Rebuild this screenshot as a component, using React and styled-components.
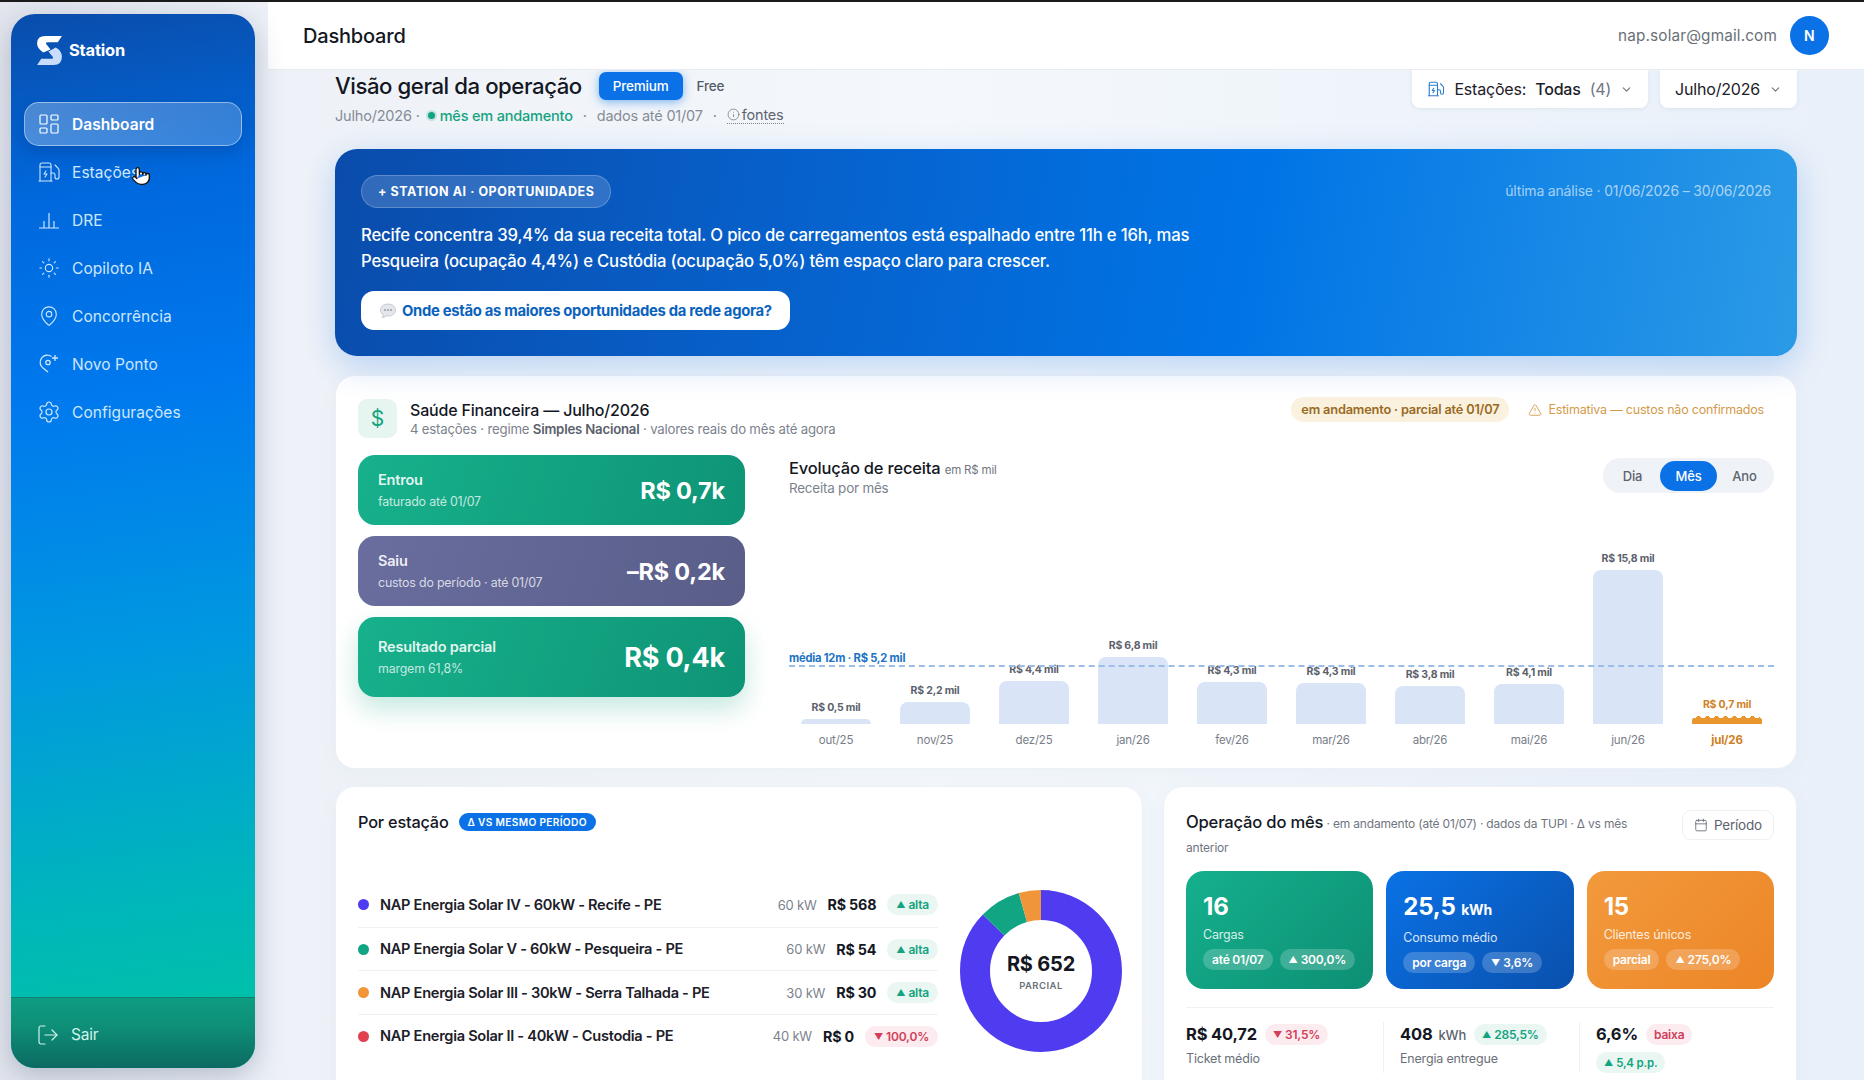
import React from "react";
import styled, { createGlobalStyle } from "styled-components";
import {
  LayoutDashboard,
  EvCharger,
  Sun,
  MapPin,
  Settings,
  LogOut,
  ChevronDown,
  TriangleAlert,
  Calendar,
  Info,
  Pointer,
} from "lucide-react";

const GlobalStyle = createGlobalStyle`
  * { box-sizing: border-box; }
  html, body { margin: 0; height: 100%; overflow: hidden; }
  body {
    font-family: "Inter", "Liberation Sans", sans-serif;
    background: #1a1a1a;
    color: #14171f;
    letter-spacing: -0.012em;
  }
`;

const Shell = styled.div`
  display: flex;
  height: 1078px;
  margin-top: 2px;
  overflow: hidden;
  background: linear-gradient(90deg, #e3e6ee 0, #eef2f8 300px, #f4f8fc 50%, #e9f0f9 100%);
`;

const Sidebar = styled.aside`
  position: relative;
  flex: 0 0 244px;
  margin: 12px 13px 12px 11px;
  display: flex;
  flex-direction: column;
  border-radius: 24px;
  overflow: hidden;
  background: linear-gradient(172deg, #0a4dab 0, #0068dc 17%, #0079ee 36%, #0098e0 60%, #00b5bc 82%, #00c6a0 100%);
  box-shadow: 0 8px 28px rgba(40, 60, 100, 0.28);
`;

const Brand = styled.div`
  display: flex;
  align-items: center;
  gap: 7px;
  padding-left: 26px;
  height: 72px;
  margin-bottom: 16px;
  color: #fff;
  font-size: 16.5px;
  font-weight: 700;
`;

const Nav = styled.nav`
  flex: 1;
  display: flex;
  flex-direction: column;
  gap: 4px;
  padding: 0 13px;
`;

const NavItem = styled.div`
  display: flex;
  align-items: center;
  gap: 11px;
  height: 44px;
  padding-left: 12px;
  border-radius: 15px;
  font-size: 15.5px;
  letter-spacing: 0.004em;
  font-weight: ${(p) => (p.$active ? 600 : 400)};
  color: ${(p) => (p.$active ? "#fff" : "#cfe6ff")};
  border: 1px solid ${(p) => (p.$active ? "rgba(255,255,255,.45)" : "transparent")};
  background: ${(p) => (p.$active ? "linear-gradient(90deg, rgba(255,255,255,.28), rgba(255,255,255,.2))" : "none")};
  box-shadow: ${(p) => (p.$active ? "0 6px 14px rgba(0,40,110,.22)" : "none")};
`;

const NavIcon = styled.span`
  display: flex;
  width: 24px;
  justify-content: center;
`;

const HandCursor = styled.span`
  position: absolute;
  left: 120px;
  top: 152px;
  display: flex;
  color: #111;
`;

const SideFooter = styled.div`
  display: flex;
  align-items: center;
  gap: 11px;
  height: 71px;
  padding: 3px 0 0 25px;
  font-size: 15.5px;
  color: #cff5ee;
  border-top: 1px solid #0c7f70;
  background: linear-gradient(180deg, #0d9d82 0, #0e8f78 40%, #0c6a62 100%);
`;

const Main = styled.div`
  flex: 1;
  min-width: 0;
  display: flex;
  flex-direction: column;
`;

const Topbar = styled.header`
  flex: 0 0 68px;
  display: flex;
  align-items: center;
  justify-content: space-between;
  padding: 0 35px;
  background: #fff;
  border-bottom: 1px solid #e8ebf0;
`;

const PageName = styled.div`
  font-size: 20px;
  font-weight: 500;
`;

const UserBox = styled.div`
  display: flex;
  align-items: center;
  gap: 13px;
  font-size: 15.3px;
  color: #6a6f78;
  letter-spacing: 0.01em;
`;

const Avatar = styled.div`
  width: 39px;
  height: 39px;
  border-radius: 50%;
  display: grid;
  place-items: center;
  background: #0a72e6;
  color: #fff;
  font-size: 14px;
  font-weight: 600;
`;

const Content = styled.main`
  flex: 1;
  min-height: 0;
  overflow: hidden;
  padding: 0 67px;
  display: flex;
  flex-direction: column;
  gap: 19px;
`;

const TopRow = styled.div`
  flex: 0 0 79px;
  margin-bottom: -19px;
  display: flex;
  justify-content: space-between;
`;

const TitleLine = styled.div`
  display: flex;
  align-items: center;
  height: 29px;
  margin-top: 1px;
`;

const PageTitle = styled.h1`
  margin: 0 17px 0 0;
  font-size: 22.2px;
  font-weight: 500;
  letter-spacing: -0.02em;
`;

const PlanTab = styled.span`
  height: 28px;
  display: flex;
  align-items: center;
  padding: 0 14px;
  border-radius: 7px;
  font-size: 13.5px;
  font-weight: 500;
  color: ${(p) => (p.$active ? "#fff" : "#555b66")};
  background: ${(p) => (p.$active ? "#0a72e6" : "none")};
  box-shadow: ${(p) => (p.$active ? "0 2px 10px rgba(10,114,230,.5)" : "none")};
`;

const SubLine = styled.div`
  display: flex;
  align-items: center;
  margin-top: 6px;
  font-size: 14.5px;
  color: #868c97;
`;

const LiveText = styled.span`
  display: flex;
  align-items: center;
  gap: 5px;
  margin: 0 10px 0 8px;
  color: #14a37f;
  font-weight: 500;
  &::before {
    content: "";
    width: 7px;
    height: 7px;
    border-radius: 50%;
    background: #14a37f;
    box-shadow: 0 0 0 2px rgba(20, 163, 127, 0.2);
  }
`;

const Sep = styled.span`
  margin: 0 10px;
`;

const SourcesLink = styled.span`
  display: flex;
  align-items: center;
  gap: 2px;
  margin-left: 10px;
  color: #5f6570;
  border-bottom: 1px dotted #7a808a;
`;

const Filters = styled.div`
  display: flex;
  gap: 12px;
`;

const FilterBox = styled.div`
  height: 38px;
  display: flex;
  align-items: center;
  gap: 9px;
  padding: 0 15px;
  background: #fff;
  border-radius: 0 0 8px 8px;
  box-shadow: 0 1px 4px rgba(40, 60, 100, 0.08);
  font-size: 16px;
  color: #1c2029;
`;

const FilterMuted = styled.span`
  color: #70757f;
`;

const FilterStrong = styled.span`
  font-weight: 500;
`;

const Banner = styled.section`
  flex: 0 0 205px;
  position: relative;
  padding: 26px 26px;
  border-radius: 22px;
  color: #fff;
  background: linear-gradient(100deg, #0a4cab 0, #0760ca 30%, #0074e6 62%, #2b9ae6 100%);
  box-shadow: 0 10px 34px rgba(0, 100, 220, 0.24);
`;

const AiChip = styled.div`
  display: inline-flex;
  align-items: center;
  height: 33px;
  padding: 0 16px;
  border-radius: 17px;
  background: rgba(255, 255, 255, 0.16);
  border: 1px solid rgba(255, 255, 255, 0.22);
  font-size: 12.5px;
  font-weight: 700;
  letter-spacing: 0.045em;
`;

const AnalysisDate = styled.div`
  position: absolute;
  right: 26px;
  top: 33px;
  font-size: 14px;
  color: rgba(255, 255, 255, 0.62);
`;

const BannerText = styled.p`
  margin: 14px 0 17px;
  max-width: 860px;
  font-size: 16.7px;
  font-weight: 500;
  line-height: 26px;
`;

const AskButton = styled.div`
  display: inline-flex;
  align-items: center;
  gap: 5px;
  height: 39px;
  padding: 0 18px;
  border-radius: 13px;
  background: #fff;
  color: #0a62bd;
  font-size: 14.8px;
  font-weight: 700;
  letter-spacing: -0.02em;
`;

const Card = styled.section`
  background: #fff;
  border: 1px solid #edf1f6;
  border-radius: 20px;
  padding: 23px 22px 18px;
  box-shadow: 0 4px 20px rgba(60, 90, 140, 0.04);
`;

const FinanceHead = styled.div`
  display: flex;
  align-items: center;
  height: 39px;
  gap: 13px;
`;

const DollarBox = styled.div`
  width: 39px;
  height: 39px;
  border-radius: 9px;
  display: grid;
  place-items: center;
  background: #e7f5f0;
  color: #14a37f;
  font-size: 21px;
`;

const HeadText = styled.div`
  flex: 1;
`;

const CardTitle = styled.div`
  font-size: ${(p) => p.$size || 16.3}px;
  font-weight: 500;
  line-height: 22px;
`;

const CardSub = styled.div`
  font-size: 13.2px;
  color: #7c828d;
  line-height: 17px;
  strong {
    font-weight: 600;
    color: #5b616c;
  }
`;

const StatusPill = styled.span`
  align-self: flex-start;
  height: 25px;
  margin-top: -2px;
  display: flex;
  align-items: center;
  padding: 0 10px;
  border-radius: 13px;
  background: #fbf1df;
  color: #9a6a1e;
  font-size: 12.8px;
  font-weight: 600;
`;

const EstimateNote = styled.span`
  align-self: flex-start;
  height: 25px;
  display: flex;
  align-items: center;
  gap: 6px;
  margin: -2px 10px 0 6px;
  font-size: 12.5px;
  color: #d49a4a;
`;

const FinanceBody = styled.div`
  display: flex;
  gap: 44px;
  margin-top: 17px;
`;

const MoneyStack = styled.div`
  flex: 0 0 387px;
  display: flex;
  flex-direction: column;
  gap: 11px;
`;

const MoneyCard = styled.div`
  height: ${(p) => (p.$big ? 80 : 70)}px;
  display: flex;
  align-items: center;
  justify-content: space-between;
  padding: 0 20px;
  border-radius: 17px;
  color: #fff;
  background: ${(p) =>
    p.$tone === "slate"
      ? "linear-gradient(110deg, #6a6e9f 0, #595d88 100%)"
      : "linear-gradient(110deg, #17b18c 0, #0e9476 100%)"};
  box-shadow: ${(p) => (p.$big ? "0 12px 26px rgba(16,160,125,.24)" : "none")};
`;

const MoneyLabel = styled.div`
  font-size: 14.5px;
  font-weight: 600;
  color: rgba(255, 255, 255, 0.9);
`;

const MoneyNote = styled.div`
  margin-top: 6px;
  font-size: 12.4px;
  font-weight: 400;
  color: rgba(255, 255, 255, 0.75);
`;

const MoneyValue = styled.div`
  font-size: ${(p) => (p.$big ? 27 : 23.5)}px;
  font-weight: 700;
`;

const ChartCol = styled.div`
  flex: 1;
  min-width: 0;
  height: 295px;
  display: flex;
  flex-direction: column;
`;

const ChartHead = styled.div`
  display: flex;
  justify-content: space-between;
  align-items: flex-start;
  height: 40px;
`;

const ChartTitle = styled.div`
  font-size: 16.5px;
  font-weight: 500;
  margin-top: 3px;
  span {
    font-size: 11.5px;
    font-weight: 400;
    color: #70757f;
  }
`;

const ChartSub = styled.div`
  font-size: 13.4px;
  color: #7c828d;
  margin-top: 2px;
`;

const Segments = styled.div`
  display: flex;
  align-items: center;
  height: 35px;
  margin-top: 3px;
  padding: 2px;
  border-radius: 18px;
  background: #eff2f7;
`;

const SegmentItem = styled.span`
  width: ${(p) => (p.$active ? 57 : 55)}px;
  height: 30px;
  display: grid;
  place-items: center;
  border-radius: 15px;
  font-size: 13px;
  font-weight: 500;
  color: ${(p) => (p.$active ? "#fff" : "#5d636e")};
  background: ${(p) => (p.$active ? "#0a72e6" : "none")};
`;

const Plot = styled.div`
  position: relative;
  flex: 1;
  display: grid;
  grid-template-columns: repeat(10, 1fr);
  column-gap: 29px;
  padding: 0 12px;
`;

const AvgLine = styled.div`
  position: absolute;
  left: 0;
  right: 0;
  bottom: 83px;
  height: 0;
  border-top: 2px dashed #9cbde8;
`;

const AvgLabel = styled.div`
  position: absolute;
  left: 0;
  bottom: 85px;
  font-size: 11.2px;
  font-weight: 700;
  color: #1c73c4;
  letter-spacing: -0.02em;
`;

const BarColumn = styled.div`
  position: relative;
  display: flex;
  flex-direction: column;
  justify-content: flex-end;
  align-items: center;
`;

const BarValue = styled.div`
  position: relative;
  margin-bottom: ${(p) => (p.$now ? 7 : 5)}px;
  white-space: nowrap;
  font-size: 10.5px;
  font-weight: 700;
  color: ${(p) => (p.$now ? "#cf7f1f" : "#5b616c")};
`;

const Bar = styled.div`
  position: relative;
  width: 100%;
  height: ${(p) => p.$h}px;
  border-radius: ${(p) => (p.$now ? "2px 2px 0 0" : "8px 8px 0 0")};
  background: ${(p) => (p.$now ? "#e8962d" : "#d9e5f7")};
  ${(p) =>
    p.$now &&
    `&::before {
      content: "";
      position: absolute;
      left: 2px;
      right: 2px;
      top: -2px;
      height: 3px;
      background: radial-gradient(circle at 50% 100%, #e8962d 3px, transparent 3px) 0 0 / 9px 3px repeat-x;
    }`}
`;

const BarMonth = styled.div`
  height: 26px;
  line-height: 32px;
  font-size: 11.5px;
  font-weight: ${(p) => (p.$now ? 700 : 400)};
  color: ${(p) => (p.$now ? "#cf7f1f" : "#787e89")};
`;

const BottomGrid = styled.div`
  display: grid;
  grid-template-columns: 808px 634px;
  gap: 20px;
  flex: 1;
  min-height: 320px;
  margin-top: -2px;
`;

const StationHead = styled.div`
  display: flex;
  align-items: center;
  gap: 10px;
  height: 24px;
`;

const DeltaPill = styled.span`
  height: 18px;
  display: flex;
  align-items: center;
  padding: 0 9px;
  border-radius: 9px;
  background: #0a72e6;
  color: #fff;
  font-size: 10.2px;
  font-weight: 600;
  letter-spacing: 0.03em;
`;

const StationBody = styled.div`
  display: flex;
  gap: 22px;
  margin-top: 49px;
`;

const StationList = styled.div`
  flex: 0 0 580px;
`;

const StationRow = styled.div`
  display: flex;
  align-items: center;
  height: 43.7px;
  border-top: ${(p) => (p.$first ? "none" : "1px solid #eef1f5")};
`;

const Dot = styled.span`
  width: 11px;
  height: 11px;
  border-radius: 50%;
  margin-right: 11px;
  background: ${(p) => p.$color};
`;

const StationName = styled.span`
  flex: 1;
  font-size: 14.6px;
  font-weight: 600;
  color: #1c2029;
  letter-spacing: -0.02em;
`;

const StationKw = styled.span`
  font-size: 13px;
  color: #7c828d;
  margin-right: 11px;
`;

const StationValue = styled.span`
  font-size: 14.3px;
  font-weight: 700;
  margin-right: 11px;
`;

const Trend = styled.span`
  height: 21px;
  display: inline-flex;
  align-items: center;
  gap: 3px;
  padding: 0 8px;
  border-radius: 11px;
  font-size: 12px;
  font-weight: 600;
  white-space: nowrap;
  color: ${(p) => (p.$down ? "#d0405a" : "#14a37f")};
  background: ${(p) => (p.$down ? "#fdecef" : "#e9f6f2")};
`;

const StationTrend = styled(Trend)`
  padding: 0 9px;
`;

const TrendMark = styled.span`
  font-size: 9px;
`;

const DonutWrap = styled.div`
  position: relative;
  width: 162px;
  height: 162px;
  margin-top: 7px;
`;

const DonutCenter = styled.div`
  position: absolute;
  inset: 0;
  display: flex;
  flex-direction: column;
  align-items: center;
  justify-content: center;
`;

const DonutValue = styled.div`
  font-size: 20px;
  font-weight: 700;
`;

const DonutNote = styled.div`
  margin-top: 4px;
  font-size: 9.5px;
  font-weight: 600;
  letter-spacing: 0.05em;
  color: #6a6f78;
`;

const OpsHead = styled.div`
  display: flex;
  justify-content: space-between;
  align-items: flex-start;
  height: 61px;
`;

const OpsTitle = styled.div`
  max-width: 450px;
  line-height: 24px;
  font-size: 12px;
  color: #70757f;
  b {
    font-size: 16.6px;
    font-weight: 500;
    color: #14171f;
  }
`;

const PeriodButton = styled.div`
  height: 30px;
  display: flex;
  align-items: center;
  gap: 6px;
  padding: 0 11px;
  border: 1px solid #edf0f4;
  border-radius: 9px;
  font-size: 13.5px;
  color: #5d636e;
`;

const KpiGrid = styled.div`
  display: grid;
  grid-template-columns: repeat(3, 1fr);
  gap: 13px;
  padding-bottom: 18px;
  border-bottom: 1px solid #eef1f5;
`;

const KpiCard = styled.div`
  height: 118px;
  padding: 22px 17px 0;
  border-radius: 18px;
  color: #fff;
  background: ${(p) => p.$bg};
`;

const KpiValue = styled.div`
  font-size: 24px;
  font-weight: 700;
  line-height: 28px;
  span {
    font-size: 14px;
  }
`;

const KpiLabel = styled.div`
  margin-top: 6px;
  font-size: 12.5px;
  color: rgba(255, 255, 255, 0.85);
`;

const KpiChips = styled.div`
  display: flex;
  gap: 7px;
  margin-top: 7px;
`;

const KpiChip = styled.span`
  height: 21px;
  display: flex;
  align-items: center;
  gap: 3px;
  padding: 0 9px;
  border-radius: 11px;
  background: rgba(255, 255, 255, 0.2);
  font-size: 12px;
  font-weight: 600;
  white-space: nowrap;
`;

const StatGrid = styled.div`
  display: grid;
  grid-template-columns: 197px 196px 1fr;
  margin-top: 14px;
`;

const StatCell = styled.div`
  padding-left: ${(p) => (p.$first ? 0 : 16)}px;
  border-left: ${(p) => (p.$first ? "none" : "1px solid #eef1f5")};
`;

const StatTop = styled.div`
  display: flex;
  align-items: center;
  gap: 8px;
  height: 24px;
`;

const StatValue = styled.span`
  font-size: 16.5px;
  font-weight: 700;
  span {
    margin-left: 6px;
    font-size: 13px;
    font-weight: 500;
    color: #5d636e;
  }
`;

const StatLabel = styled.div`
  margin-top: 5px;
  font-size: 12.5px;
  color: #6a6f78;
`;

const SmallTrend = styled(Trend)`
  margin-top: 6px;
  font-size: 11.5px;
`;

// logo e icones que o lucide nao tem
function Logo() {
  return (
    <svg width="25" height="29" viewBox="0 0 24 28">
      <path fill="#fff" d="M8 0H24L20 6H10Q8 6 8.6 7.6L13 13 6 16Q0 12 0 7 0 0 8 0Z" />
      <path fill="#c9dcfb" d="M18 11Q24 14 24 20 24 28 16 28H0L4 22H14Q16 22 15.4 20.4L11 15Z" />
    </svg>
  );
}

function BarsIcon() {
  return (
    <svg width="20" height="20" viewBox="0 0 20 20" fill="none" stroke="currentColor" strokeWidth="1.2">
      <path d="M0 18H20M5 18V11M10 18V3M15 18V11" />
    </svg>
  );
}

function NewPointIcon() {
  return (
    <svg width="20" height="20" viewBox="0 0 20 20" fill="none" stroke="currentColor" strokeWidth="1.3">
      <circle cx="9" cy="8.5" r="2.2" />
      <path d="M12.5 2.6A7 7 0 1 0 4 14L9 18M16 1V7M13 4H19" />
    </svg>
  );
}

function ChatBubble() {
  return (
    <svg width="18" height="18" viewBox="0 0 18 18">
      <path fill="#e3e6ea" stroke="#b6bcc4" strokeWidth=".7" d="M9 2C4.6 2 1.5 4.6 1.5 8c0 2 1 3.6 2.8 4.700-.1 1.200-.6 2.200-1.300 3 1.700-.1 3.100-.8 4-1.800.6.1 1.300.1 2 .1 4.400 0 7.500-2.600 7.500-6S13.400 2 9 2z" />
      <circle cx="6" cy="8" r=".8" fill="#667" />
      <circle cx="9" cy="8" r=".8" fill="#667" />
      <circle cx="12" cy="8" r=".8" fill="#667" />
    </svg>
  );
}

function Donut({ slices }) {
  const r = 66;
  const len = 2 * Math.PI * r;
  const total = slices.reduce((s, x) => s + x.value, 0);
  let run = 0;
  return (
    <svg width="162" height="162" viewBox="0 0 162 162">
      <g transform="rotate(-90 81 81)" fill="none" strokeWidth="30">
        {slices.map((s) => {
          const part = (s.value / total) * len;
          const el = (
            <circle
              key={s.color}
              cx="81"
              cy="81"
              r={r}
              stroke={s.color}
              strokeDasharray={`${part} ${len - part}`}
              strokeDashoffset={-run}
            />
          );
          run += part;
          return el;
        })}
      </g>
    </svg>
  );
}

const navItems = [
  { label: "Dashboard", icon: <LayoutDashboard size={24} strokeWidth={1.2} />, active: true },
  { label: "Estações", icon: <EvCharger size={24} strokeWidth={1.1} /> },
  { label: "DRE", icon: <BarsIcon /> },
  { label: "Copiloto IA", icon: <Sun size={22} strokeWidth={1.2} /> },
  { label: "Concorrência", icon: <MapPin size={22} strokeWidth={1.2} /> },
  { label: "Novo Ponto", icon: <NewPointIcon /> },
  { label: "Configurações", icon: <Settings size={24} strokeWidth={1.2} /> },
];

const bars = [
  { month: "out/25", value: "R$ 0,5 mil", h: 5 },
  { month: "nov/25", value: "R$ 2,2 mil", h: 22 },
  { month: "dez/25", value: "R$ 4,4 mil", h: 43 },
  { month: "jan/26", value: "R$ 6,8 mil", h: 67 },
  { month: "fev/26", value: "R$ 4,3 mil", h: 42 },
  { month: "mar/26", value: "R$ 4,3 mil", h: 41 },
  { month: "abr/26", value: "R$ 3,8 mil", h: 38 },
  { month: "mai/26", value: "R$ 4,1 mil", h: 40 },
  { month: "jun/26", value: "R$ 15,8 mil", h: 154 },
  { month: "jul/26", value: "R$ 0,7 mil", h: 6, now: true },
];

const stations = [
  { name: "NAP Energia Solar IV - 60kW - Recife - PE", kw: "60 kW", value: "R$ 568", trend: "alta", color: "#4f3cf0" },
  { name: "NAP Energia Solar V - 60kW - Pesqueira - PE", kw: "60 kW", value: "R$ 54", trend: "alta", color: "#12a583" },
  { name: "NAP Energia Solar III - 30kW - Serra Talhada - PE", kw: "30 kW", value: "R$ 30", trend: "alta", color: "#f0953a" },
  { name: "NAP Energia Solar II - 40kW - Custodia - PE", kw: "40 kW", value: "R$ 0", trend: "100,0%", color: "#e04050", down: true },
];

const slices = [
  { value: 568, color: "#4f3cf0" },
  { value: 54, color: "#12a583" },
  { value: 30, color: "#f0953a" },
];

export default function App() {
  return (
    <>
      <GlobalStyle />
      <Shell>
        <Sidebar>
          <Brand>
            <Logo />
            Station
          </Brand>
          <Nav>
            {navItems.map((item) => (
              <NavItem key={item.label} $active={item.active}>
                <NavIcon>{item.icon}</NavIcon>
                {item.label}
              </NavItem>
            ))}
          </Nav>
          <HandCursor>
            <Pointer size={20} fill="#fff" strokeWidth={1.6} />
          </HandCursor>
          <SideFooter>
            <NavIcon>
              <LogOut size={24} strokeWidth={1.2} />
            </NavIcon>
            Sair
          </SideFooter>
        </Sidebar>

        <Main>
          <Topbar>
            <PageName>Dashboard</PageName>
            <UserBox>
              nap.solar@gmail.com
              <Avatar>N</Avatar>
            </UserBox>
          </Topbar>

          <Content>
            <TopRow>
              <div>
                <TitleLine>
                  <PageTitle>Visão geral da operação</PageTitle>
                  <PlanTab $active>Premium</PlanTab>
                  <PlanTab>Free</PlanTab>
                </TitleLine>
                <SubLine>
                  Julho/2026 ·
                  <LiveText>mês em andamento</LiveText>·<Sep>dados até 01/07</Sep>·
                  <SourcesLink>
                    <Info size={13} strokeWidth={1.2} />
                    fontes
                  </SourcesLink>
                </SubLine>
              </div>
              <Filters>
                <FilterBox>
                  <EvCharger size={18} color="#2f7fd0" strokeWidth={1.5} />
                  Estações: <FilterStrong>Todas</FilterStrong> <FilterMuted>(4)</FilterMuted>
                  <ChevronDown size={13} color="#70757f" />
                </FilterBox>
                <FilterBox>
                  Julho/2026
                  <ChevronDown size={13} color="#70757f" />
                </FilterBox>
              </Filters>
            </TopRow>

            <Banner>
              <AiChip>+ STATION AI · OPORTUNIDADES</AiChip>
              <AnalysisDate>última análise · 01/06/2026 – 30/06/2026</AnalysisDate>
              <BannerText>
                Recife concentra 39,4% da sua receita total. O pico de carregamentos está espalhado entre 11h e 16h, mas
                Pesqueira (ocupação 4,4%) e Custódia (ocupação 5,0%) têm espaço claro para crescer.
              </BannerText>
              <AskButton>
                <ChatBubble />
                Onde estão as maiores oportunidades da rede agora?
              </AskButton>
            </Banner>

            <Card>
              <FinanceHead>
                <DollarBox>$</DollarBox>
                <HeadText>
                  <CardTitle $size={16}>Saúde Financeira — Julho/2026</CardTitle>
                  <CardSub>
                    4 estações · regime <strong>Simples Nacional</strong> · valores reais do mês até agora
                  </CardSub>
                </HeadText>
                <StatusPill>em andamento · parcial até 01/07</StatusPill>
                <EstimateNote>
                  <TriangleAlert size={14} strokeWidth={1.5} />
                  Estimativa — custos não confirmados
                </EstimateNote>
              </FinanceHead>
              <FinanceBody>
                <MoneyStack>
                  <MoneyCard>
                    <div>
                      <MoneyLabel>Entrou</MoneyLabel>
                      <MoneyNote>faturado até 01/07</MoneyNote>
                    </div>
                    <MoneyValue>R$ 0,7k</MoneyValue>
                  </MoneyCard>
                  <MoneyCard $tone="slate">
                    <div>
                      <MoneyLabel>Saiu</MoneyLabel>
                      <MoneyNote>custos do período · até 01/07</MoneyNote>
                    </div>
                    <MoneyValue>–R$ 0,2k</MoneyValue>
                  </MoneyCard>
                  <MoneyCard $big>
                    <div>
                      <MoneyLabel>Resultado parcial</MoneyLabel>
                      <MoneyNote>margem 61,8%</MoneyNote>
                    </div>
                    <MoneyValue $big>R$ 0,4k</MoneyValue>
                  </MoneyCard>
                </MoneyStack>
                <ChartCol>
                  <ChartHead>
                    <div>
                      <ChartTitle>
                        Evolução de receita <span>em R$ mil</span>
                      </ChartTitle>
                      <ChartSub>Receita por mês</ChartSub>
                    </div>
                    <Segments>
                      <SegmentItem>Dia</SegmentItem>
                      <SegmentItem $active>Mês</SegmentItem>
                      <SegmentItem>Ano</SegmentItem>
                    </Segments>
                  </ChartHead>
                  <Plot>
                    {bars.map((b) => (
                      <BarColumn key={b.month}>
                        <BarValue $now={b.now}>{b.value}</BarValue>
                        <Bar $h={b.h} $now={b.now} />
                        <BarMonth $now={b.now}>{b.month}</BarMonth>
                      </BarColumn>
                    ))}
                    <AvgLine />
                    <AvgLabel>média 12m · R$ 5,2 mil</AvgLabel>
                  </Plot>
                </ChartCol>
              </FinanceBody>
            </Card>

            <BottomGrid>
              <Card>
                <StationHead>
                  <CardTitle>Por estação</CardTitle>
                  <DeltaPill>Δ VS MESMO PERÍODO</DeltaPill>
                </StationHead>
                <StationBody>
                  <StationList>
                    {stations.map((s, i) => (
                      <StationRow key={s.name} $first={i === 0}>
                        <Dot $color={s.color} />
                        <StationName>{s.name}</StationName>
                        <StationKw>{s.kw}</StationKw>
                        <StationValue>{s.value}</StationValue>
                        <StationTrend $down={s.down}>
                          <TrendMark>{s.down ? "▼" : "▲"}</TrendMark>
                          {s.trend}
                        </StationTrend>
                      </StationRow>
                    ))}
                  </StationList>
                  <DonutWrap>
                    <Donut slices={slices} />
                    <DonutCenter>
                      <DonutValue>R$ 652</DonutValue>
                      <DonutNote>PARCIAL</DonutNote>
                    </DonutCenter>
                  </DonutWrap>
                </StationBody>
              </Card>

              <Card>
                <OpsHead>
                  <OpsTitle>
                    <b>Operação do mês</b> · em andamento (até 01/07) · dados da TUPI · Δ vs mês anterior
                  </OpsTitle>
                  <PeriodButton>
                    <Calendar size={14} strokeWidth={1.4} />
                    Período
                  </PeriodButton>
                </OpsHead>
                <KpiGrid>
                  <KpiCard $bg="linear-gradient(135deg, #15b08d 0, #0d8f74 100%)">
                    <KpiValue>16</KpiValue>
                    <KpiLabel>Cargas</KpiLabel>
                    <KpiChips>
                      <KpiChip>até 01/07</KpiChip>
                      <KpiChip>
                        <TrendMark>▲</TrendMark>300,0%
                      </KpiChip>
                    </KpiChips>
                  </KpiCard>
                  <KpiCard $bg="linear-gradient(135deg, #0a72e6 0, #0a50ac 100%)">
                    <KpiValue>
                      25,5 <span>kWh</span>
                    </KpiValue>
                    <KpiLabel>Consumo médio</KpiLabel>
                    <KpiChips>
                      <KpiChip>por carga</KpiChip>
                      <KpiChip>
                        <TrendMark>▼</TrendMark>3,6%
                      </KpiChip>
                    </KpiChips>
                  </KpiCard>
                  <KpiCard $bg="linear-gradient(135deg, #f29a3d 0, #ec8526 100%)">
                    <KpiValue>15</KpiValue>
                    <KpiLabel>Clientes únicos</KpiLabel>
                    <KpiChips>
                      <KpiChip>parcial</KpiChip>
                      <KpiChip>
                        <TrendMark>▲</TrendMark>275,0%
                      </KpiChip>
                    </KpiChips>
                  </KpiCard>
                </KpiGrid>
                <StatGrid>
                  <StatCell $first>
                    <StatTop>
                      <StatValue>R$ 40,72</StatValue>
                      <Trend $down>
                        <TrendMark>▼</TrendMark>31,5%
                      </Trend>
                    </StatTop>
                    <StatLabel>Ticket médio</StatLabel>
                  </StatCell>
                  <StatCell>
                    <StatTop>
                      <StatValue>
                        408<span>kWh</span>
                      </StatValue>
                      <Trend>
                        <TrendMark>▲</TrendMark>285,5%
                      </Trend>
                    </StatTop>
                    <StatLabel>Energia entregue</StatLabel>
                  </StatCell>
                  <StatCell>
                    <StatTop>
                      <StatValue>6,6%</StatValue>
                      <Trend $down>baixa</Trend>
                    </StatTop>
                    <SmallTrend>
                      <TrendMark>▲</TrendMark>5,4 p.p.
                    </SmallTrend>
                  </StatCell>
                </StatGrid>
              </Card>
            </BottomGrid>
          </Content>
        </Main>
      </Shell>
    </>
  );
}
